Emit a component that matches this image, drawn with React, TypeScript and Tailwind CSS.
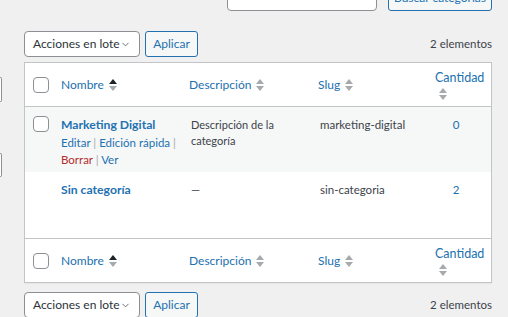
import { ChevronDown } from "lucide-react";

const font = { fontFamily: 'Lato, "Noto Sans", sans-serif' };

const SortIcon = ({ active = false }: { active?: boolean }) => (
  <svg width="8" height="12" viewBox="0 0 8 12" className="shrink-0">
    <polygon points="4,0 8,5 0,5" fill={active ? "#1d2327" : "#a7aaad"} />
    <polygon points="0,7 8,7 4,12" fill="#a7aaad" />
  </svg>
);

const Checkbox = () => (
  <span className="block w-4 h-4 rounded-[4px] border border-[#8c8f94] bg-white" />
);

const cols = "grid grid-cols-[26px_128px_129px_117px_1fr]";

const HeaderRow = ({ footer = false }: { footer?: boolean }) => (
  <div
    className={`${cols} text-[12px] text-[#2271b1] whitespace-nowrap ${
      footer ? "h-[44px] border-t border-[#c3c4c7]" : "h-[44px] border-b border-[#c3c4c7]"
    }`}
  >
    <div className="flex items-center pl-[8px]">
      <Checkbox />
    </div>
    <div className="flex items-center gap-[5px] pl-[10px]">
      <span>Nombre</span>
      <SortIcon active />
    </div>
    <div className="flex items-center gap-[5px] pl-[10px]">
      <span>Descripción</span>
      <SortIcon />
    </div>
    <div className="flex items-center gap-[5px] pl-[10px]">
      <span>Slug</span>
      <SortIcon />
    </div>
    <div className="flex flex-col justify-center pl-[10px] leading-[17px]">
      <span className="text-[12.5px]">Cantidad</span>
      <span className="pl-[4px] pt-[2px]">
        <SortIcon />
      </span>
    </div>
  </div>
);

const BulkBar = () => (
  <div className="flex items-center h-[26px] whitespace-nowrap">
    <div className="flex items-center w-[116px] h-[26px] pl-[8px] pr-[8px] bg-white border border-[#8c8f94] rounded-[4px] text-[12px] text-[#2c3338]">
      <span>Acciones en lote</span>
      <ChevronDown size={11} strokeWidth={1.8} color="#50575e" className="ml-auto" />
    </div>
    <div className="ml-[5px] flex items-center justify-center w-[53px] h-[26px] bg-[#f6f7f7] border border-[#2271b1] rounded-[3px] text-[12px] text-[#2271b1]">
      Aplicar
    </div>
    <div className="ml-auto text-[11.5px] text-[#3c434a]">2 elementos</div>
  </div>
);

export default function App() {
  return (
    <div className="w-[508px] h-[317px] overflow-hidden bg-[#f0f0f1] flex" style={font}>
      {/* cut-off form fields on the left */}
      <div className="w-[2px] shrink-0">
        <div className="mt-[77px] h-[25px] bg-white border-r border-y border-[#8c8f94] rounded-r-[4px]" />
        <div className="mt-[51px] h-[24px] bg-white border-r border-y border-[#8c8f94] rounded-r-[4px]" />
      </div>

      <div className="ml-[22px] w-[468px] flex flex-col">
        {/* search */}
        <div className="mt-[-19px] h-[30px] flex justify-end gap-[11px]">
          <div className="w-[150px] h-[30px] bg-white border border-[#8c8f94] rounded-[4px]" />
          <div className="w-[104px] h-[30px] bg-[#f6f7f7] border border-[#2271b1] rounded-[3px] flex items-center justify-center whitespace-nowrap text-[12px] text-[#2271b1] pt-[4px]">
            Buscar categorías
          </div>
        </div>

        <div className="mt-[20px]">
          <BulkBar />
        </div>

        {/* table */}
        <div className="mt-[5px] bg-white border border-[#c3c4c7] shadow-[0_1px_1px_rgba(0,0,0,0.04)]">
          <HeaderRow />

          <div className={`${cols} h-[65px] bg-[#f6f7f7] text-[11.5px] text-[#3c434a]`}>
            <div className="pl-[8px] pt-[9px]">
              <Checkbox />
            </div>
            <div className="pl-[10px] pt-[9px] whitespace-nowrap">
              <div className="text-[12.2px] font-bold text-[#2271b1] leading-[18px]">
                Marketing Digital
              </div>
              <div className="leading-[17px] text-[#2271b1]">
                Editar <span className="text-[#a7aaad]">|</span> Edición rápida{" "}
                <span className="text-[#a7aaad]">|</span>
                <br />
                <span className="text-[#b32d2e]">Borrar</span>{" "}
                <span className="text-[#a7aaad]">|</span> Ver
              </div>
            </div>
            <div className="pl-[12px] pr-[14px] pt-[10px] leading-[16px] text-[11px]">
              Descripción de la categoría
            </div>
            <div className="pl-[12px] pt-[9px] leading-[18px] whitespace-nowrap">marketing-digital</div>
            <div className="pt-[9px] leading-[18px] text-center text-[#2271b1] pr-[4px]">0</div>
          </div>

          <div className={`${cols} h-[66px] text-[11.5px] text-[#3c434a]`}>
            <div />
            <div className="pl-[10px] pt-[9px] text-[12.2px] font-bold text-[#2271b1] leading-[18px] whitespace-nowrap">
              Sin categoría
            </div>
            <div className="pl-[12px] pt-[9px] leading-[18px]">—</div>
            <div className="pl-[12px] pt-[9px] leading-[18px]">sin-categoria</div>
            <div className="pt-[9px] leading-[18px] text-center text-[#2271b1] pr-[4px]">2</div>
          </div>

          <HeaderRow footer />
        </div>

        <div className="mt-[9px]">
          <BulkBar />
        </div>
      </div>
    </div>
  );
}
